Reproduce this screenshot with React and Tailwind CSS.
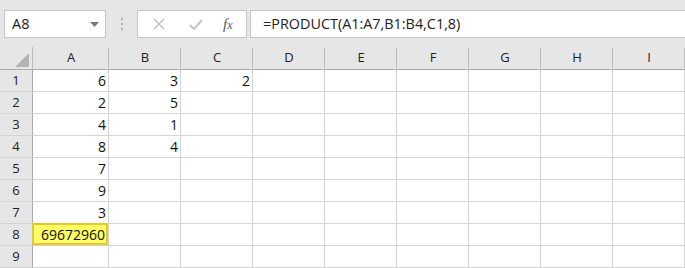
import React from 'react';

const COLS = ['A', 'B', 'C', 'D', 'E', 'F', 'G', 'H', 'I'];

// cell values by row, columns A..C
const DATA = {
  1: ['6', '3', '2'],
  2: ['2', '5'],
  3: ['4', '1'],
  4: ['8', '4'],
  5: ['7'],
  6: ['9'],
  7: ['3'],
  8: ['69672960'],
  9: [],
};

const font = { fontFamily: '"Open Sans", "Noto Sans", sans-serif' };

function Toolbar() {
  return (
    <div className="h-[47px] bg-[#e6e6e6] flex items-start pt-[10px] pl-[4px]">
      {/* name box */}
      <div className="w-[102px] h-[28px] bg-white border border-[#c6c6c6] flex items-center justify-between pl-[7px] pr-[6px]">
        <span className="text-[14.5px] text-[#222]">A8</span>
        <svg width="9" height="5" viewBox="0 0 9 5"><path d="M0 0h9L4.5 5z" fill="#777" /></svg>
      </div>
      {/* dotted grip */}
      <div className="w-[31px] h-[28px] flex flex-col items-center justify-center gap-[3px]">
        <span className="w-[2px] h-[2px] bg-[#b0b0b0]" />
        <span className="w-[2px] h-[2px] bg-[#b0b0b0]" />
        <span className="w-[2px] h-[2px] bg-[#b0b0b0]" />
      </div>
      {/* cancel / enter / fx */}
      <div className="w-[110px] h-[28px] bg-white border border-[#c6c6c6] flex items-center">
        <svg className="ml-[15px]" width="12" height="12" viewBox="0 0 12 12">
          <path d="M1 1l10 10M11 1L1 11" stroke="#bdbdbd" strokeWidth="1.4" />
        </svg>
        <svg className="ml-[24px]" width="14" height="11" viewBox="0 0 14 11">
          <path d="M1 6l4 4 8-9" stroke="#c4c4c4" strokeWidth="2" fill="none" />
        </svg>
        <span className="ml-[20px] text-[15px] italic text-[#555]" style={{ fontFamily: '"Liberation Serif", serif' }}>
          f<span className="text-[12px]">x</span>
        </span>
      </div>
      {/* formula bar */}
      <div className="ml-[3px] flex-1 h-[28px] bg-white border border-r-0 border-[#c6c6c6] flex items-center pl-[12px]">
        <span className="text-[14.4px] text-[#222] whitespace-nowrap">=PRODUCT(A1:A7,B1:B4,C1,8)</span>
      </div>
    </div>
  );
}

function Grid() {
  return (
    <div className="grid grid-cols-[33px_76px_72px_72px_72px_72px_72px_72px_72px_72px]">
      {/* corner */}
      <div className="h-[23px] bg-[#e6e6e6] border-r border-b border-r-[#bcbcbc] border-b-[#ababab] relative">
        <svg className="absolute right-[3px] bottom-[2px]" width="14" height="14" viewBox="0 0 14 14">
          <path d="M14 0V14H0z" fill="#b4b4b4" />
        </svg>
      </div>
      {COLS.map(c => (
        <div
          key={c}
          className="h-[23px] bg-[#e6e6e6] border-b border-b-[#ababab] flex items-center justify-center text-[13px] text-[#222] relative"
        >
          {c}
          <span className="absolute right-0 top-[1px] bottom-[1px] w-px bg-[#bcbcbc]" />
        </div>
      ))}

      {Object.entries(DATA).map(([row, vals]) => (
        <React.Fragment key={row}>
          <div className="h-[22px] bg-[#e6e6e6] border-r border-b border-r-[#ababab] border-b-[#d4d4d4] flex items-center justify-center text-[13px] text-[#222]">
            {row}
          </div>
          {COLS.map((c, i) => {
            const v = vals[i];
            const selected = row === '8' && i === 0;
            if (selected) {
              return (
                <div key={c} className="h-[22px] border-r border-b border-[#d4d4d4] relative">
                  <div className="absolute -left-px -top-px right-0 bottom-0 bg-[#ffff66] border-2 border-[#e8c62e] flex items-center justify-end pr-[1px] text-[14px] text-[#111]">
                    {v}
                  </div>
                </div>
              );
            }
            return (
              <div
                key={c}
                className="h-[22px] bg-white border-r border-b border-[#d4d4d4] flex items-center justify-end pr-[2px] text-[14px] text-[#111]"
              >
                {v}
              </div>
            );
          })}
        </React.Fragment>
      ))}
    </div>
  );
}

export default function App() {
  return (
    <div className="w-[685px] h-[268px] overflow-hidden bg-white" style={font}>
      <Toolbar />
      <Grid />
    </div>
  );
}
